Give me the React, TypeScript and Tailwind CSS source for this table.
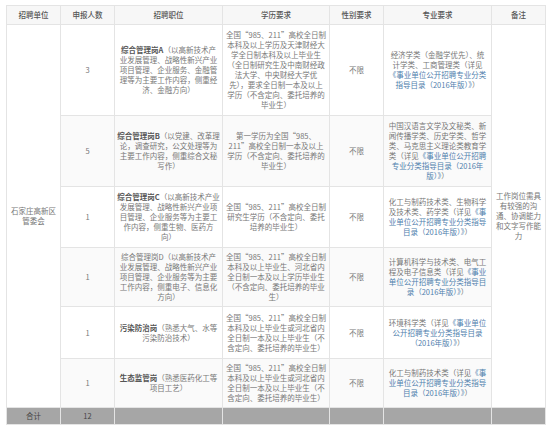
const cell = 'border border-[#e4e4e4] px-[1px] text-center align-middle whitespace-nowrap';

const Lines = ({ lines }: { lines: string[] }) => (
  <>
    {lines.map((l, i) => (
      <span key={i}>
        {i > 0 && <br />}
        {l}
      </span>
    ))}
  </>
);

const Link = ({ children }: { children: React.ReactNode }) => (
  <span className="text-[#4f80ad]">{children}</span>
);

const edu985 = [
  '全国“985、211”高校全日制',
  '本科及以上毕业生或河北省内',
  '全日制一本及以上毕业生（不',
  '含定向、委托培养的毕业生）',
];

export default function App() {
  return (
    <div className="w-[550px] h-[432px] bg-white pt-[5px] pl-[6px] font-['Noto_Sans_CJK_SC',sans-serif] text-[7.5px] leading-[10px] text-[#777]">
      <table className="border-collapse table-fixed w-[539px]">
        <colgroup>
          <col className="w-[54px]" />
          <col className="w-[54px]" />
          <col className="w-[108px]" />
          <col className="w-[107px]" />
          <col className="w-[54px]" />
          <col className="w-[108px]" />
          <col className="w-[54px]" />
        </colgroup>
        <thead>
          <tr className="h-[19px] bg-[#f7f7f7] text-[#555]">
            <th className={`${cell} font-medium`}>招聘单位</th>
            <th className={`${cell} font-medium`}>申报人数</th>
            <th className={`${cell} font-medium`}>招聘职位</th>
            <th className={`${cell} font-medium`}>学历要求</th>
            <th className={`${cell} font-medium`}>性别要求</th>
            <th className={`${cell} font-medium`}>专业要求</th>
            <th className={`${cell} font-medium`}>备注</th>
          </tr>
        </thead>
        <tbody>
          <tr className="h-[91px]">
            <td rowSpan={6} className={cell}>
              石家庄高新区
              <br />
              管委会
            </td>
            <td className={cell}>3</td>
            <td className={cell}>
              <b className="font-bold text-[#555]">综合管理岗A</b>（以高新技术产
              <br />
              业发展管理、战略性新兴产业
              <br />
              项目管理、企业服务、金融管
              <br />
              理等为主要工作内容，侧重经
              <br />
              济、金融方向）
            </td>
            <td className={cell}>
              <Lines
                lines={[
                  '全国“985、211”高校全日制',
                  '本科及以上学历及天津财经大',
                  '学全日制本科及以上毕业生',
                  '（全日制研究生及中南财经政',
                  '法大学、中央财经大学优',
                  '先），要求全日制一本及以上',
                  '学历（不含定向、委托培养的',
                  '毕业生）',
                ]}
              />
            </td>
            <td className={cell}>不限</td>
            <td className={cell}>
              经济学类（金融学优先）、统
              <br />
              计学类、工商管理类（详见
              <br />
              <Link>
                《事业单位公开招聘专业分类
                <br />
                指导目录（2016年版）》
              </Link>
              ）
            </td>
            <td rowSpan={6} className={cell}>
              工作岗位需具
              <br />
              有较强的沟
              <br />
              通、协调能力
              <br />
              和文字写作能
              <br />
              力
            </td>
          </tr>

          <tr className="h-[71px] bg-[#fafafa]">
            <td className={cell}>5</td>
            <td className={cell}>
              <b className="font-bold text-[#555]">综合管理岗B</b>（以党建、改革理
              <br />
              论，调查研究，公文处理等为
              <br />
              主要工作内容，侧重综合文秘
              <br />
              写作）
            </td>
            <td className={cell}>
              <Lines
                lines={[
                  '第一学历为全国“985、',
                  '211”高校全日制一本及以上',
                  '学历（不含定向、委托培养的',
                  '毕业生）',
                ]}
              />
            </td>
            <td className={cell}>不限</td>
            <td className={cell}>
              中国汉语言文学及文秘类、新
              <br />
              闻传播学类、历史学类、哲学
              <br />
              类、马克思主义理论类教育学
              <br />
              类（详见<Link>《事业单位公开招聘</Link>
              <br />
              <Link>
                专业分类指导目录（2016年
                <br />
                版）》
              </Link>
              ）
            </td>
          </tr>

          <tr className="h-[61px]">
            <td className={cell}>1</td>
            <td className={cell}>
              <b className="font-bold text-[#555]">综合管理岗C</b>（以高新技术产业
              <br />
              发展管理、战略性新兴产业项
              <br />
              目管理、企业服务等为主要工
              <br />
              作内容，侧重生物、医药方
              <br />
              向）
            </td>
            <td className={cell}>
              <Lines
                lines={[
                  '全国“985、211”高校全日制',
                  '研究生学历（不含定向、委托',
                  '培养的毕业生）',
                ]}
              />
            </td>
            <td className={cell}>不限</td>
            <td className={cell}>
              化工与制药技术类、生物科学
              <br />
              及技术类、药学类（详见<Link>《事</Link>
              <br />
              <Link>
                业单位公开招聘专业分类指导
                <br />
                目录（2016年版）》
              </Link>
              ）
            </td>
          </tr>

          <tr className="h-[59px] bg-[#fafafa]">
            <td className={cell}>1</td>
            <td className={cell}>
              综合管理岗D（以高新技术产
              <br />
              业发展管理、战略性新兴产业
              <br />
              项目管理、企业服务等为主要
              <br />
              工作内容，侧重电子、信息化
              <br />
              方向）
            </td>
            <td className={cell}>
              <Lines
                lines={[
                  '全国“985、211”高校全日制',
                  '本科及以上毕业生、河北省内',
                  '全日制一本及以上学历毕业生',
                  '（不含定向、委托培养的毕业',
                  '生）',
                ]}
              />
            </td>
            <td className={cell}>不限</td>
            <td className={cell}>
              计算机科学与技术类、电气工
              <br />
              程及电子信息类（详见<Link>《事业</Link>
              <br />
              <Link>
                单位公开招聘专业分类指导目
                <br />
                录（2016年版）》
              </Link>
              ）
            </td>
          </tr>

          <tr className="h-[52px]">
            <td className={cell}>1</td>
            <td className={cell}>
              <b className="font-bold text-[#555]">污染防治岗</b>（熟悉大气、水等
              <br />
              污染防治技术）
            </td>
            <td className={cell}>
              <Lines lines={edu985} />
            </td>
            <td className={cell}>不限</td>
            <td className={cell}>
              环境科学类（详见<Link>《事业单位</Link>
              <br />
              <Link>
                公开招聘专业分类指导目录
                <br />
                （2016年版）》
              </Link>
              ）
            </td>
          </tr>

          <tr className="h-[49px] bg-[#fafafa]">
            <td className={cell}>1</td>
            <td className={cell}>
              <b className="font-bold text-[#555]">生态监管岗</b>（熟悉医药化工等
              <br />
              项目工艺）
            </td>
            <td className={cell}>
              <Lines lines={edu985} />
            </td>
            <td className={cell}>不限</td>
            <td className={cell}>
              化工与制药技术类（详见<Link>《事</Link>
              <br />
              <Link>
                业单位公开招聘专业分类指导
                <br />
                目录（2016年版）》
              </Link>
              ）
            </td>
          </tr>

          <tr className="h-[17px] bg-[#a6a6a6] text-[#444]">
            <td className={cell}>合计</td>
            <td className={cell}>12</td>
            <td className={cell}></td>
            <td className={cell}></td>
            <td className={cell}></td>
            <td className={cell}></td>
            <td className={cell}></td>
          </tr>
        </tbody>
      </table>
    </div>
  );
}
